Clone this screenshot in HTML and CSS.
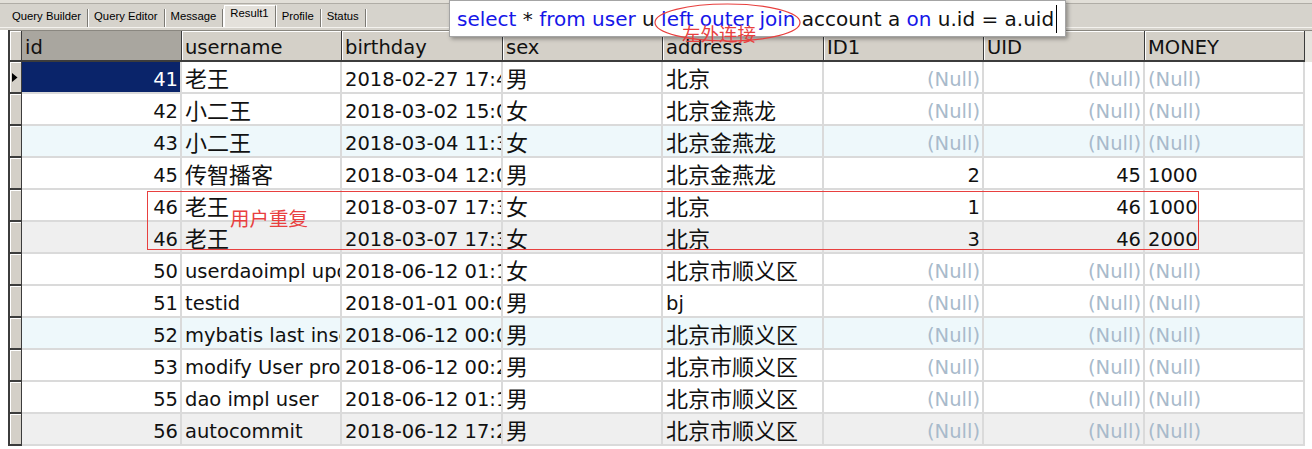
FILE: index.html
```html
<!DOCTYPE html>
<html lang="zh">
<head>
<meta charset="utf-8">
<title>Result1</title>
<link rel="stylesheet" href="styles.css">
</head>
<body>
<div class="top">
  <div class="strip"></div>
  <div class="tabs">
    <div class="tab">Query Builder</div>
    <div class="tab">Query Editor</div>
    <div class="tab">Message</div>
    <div class="tab active">Result1</div>
    <div class="tab">Profile</div>
    <div class="tab">Status</div>
  </div>
</div>

<div class="grid">
  <div class="row hrow">
    <div class="rh corner"></div>
    <div class="hc hsel">id</div>
    <div class="hc">username</div>
    <div class="hc">birthday</div>
    <div class="hc">sex</div>
    <div class="hc">address</div>
    <div class="hc">ID1</div>
    <div class="hc">UID</div>
    <div class="hc">MONEY</div>
    <div class="hfill"></div>
  </div>

  <div class="row">
    <div class="rh"><svg class="ptr" width="12" height="30" viewBox="0 0 12 30"><polygon points="2,11 7.5,15.5 2,20" fill="#000"/></svg></div>
    <div class="c r cursel">41</div><div class="c zh">老王</div><div class="c">2018-02-27 17:47:07</div><div class="c zh">男</div><div class="c zh">北京</div><div class="c r nul">(Null)</div><div class="c r nul">(Null)</div><div class="c nul">(Null)</div><div class="fill"></div>
  </div>
  <div class="row">
    <div class="rh"></div>
    <div class="c r">42</div><div class="c zh">小二王</div><div class="c">2018-03-02 15:09:37</div><div class="c zh">女</div><div class="c zh">北京金燕龙</div><div class="c r nul">(Null)</div><div class="c r nul">(Null)</div><div class="c nul">(Null)</div><div class="fill"></div>
  </div>
  <div class="row blue">
    <div class="rh"></div>
    <div class="c r">43</div><div class="c zh">小二王</div><div class="c">2018-03-04 11:34:34</div><div class="c zh">女</div><div class="c zh">北京金燕龙</div><div class="c r nul">(Null)</div><div class="c r nul">(Null)</div><div class="c nul">(Null)</div><div class="fill"></div>
  </div>
  <div class="row">
    <div class="rh"></div>
    <div class="c r">45</div><div class="c zh">传智播客</div><div class="c">2018-03-04 12:04:06</div><div class="c zh">男</div><div class="c zh">北京金燕龙</div><div class="c r">2</div><div class="c r">45</div><div class="c">1000</div><div class="fill"></div>
  </div>
  <div class="row">
    <div class="rh"></div>
    <div class="c r">46</div><div class="c zh">老王</div><div class="c">2018-03-07 17:37:26</div><div class="c zh">女</div><div class="c zh">北京</div><div class="c r">1</div><div class="c r">46</div><div class="c">1000</div><div class="fill"></div>
  </div>
  <div class="row gray">
    <div class="rh"></div>
    <div class="c r">46</div><div class="c zh">老王</div><div class="c">2018-03-07 17:37:26</div><div class="c zh">女</div><div class="c zh">北京</div><div class="c r">3</div><div class="c r">46</div><div class="c">2000</div><div class="fill"></div>
  </div>
  <div class="row">
    <div class="rh"></div>
    <div class="c r">50</div><div class="c">userdaoimpl update</div><div class="c">2018-06-12 01:19:53</div><div class="c zh">女</div><div class="c zh">北京市顺义区</div><div class="c r nul">(Null)</div><div class="c r nul">(Null)</div><div class="c nul">(Null)</div><div class="fill"></div>
  </div>
  <div class="row">
    <div class="rh"></div>
    <div class="c r">51</div><div class="c">testid</div><div class="c">2018-01-01 00:00:00</div><div class="c zh">男</div><div class="c">bj</div><div class="c r nul">(Null)</div><div class="c r nul">(Null)</div><div class="c nul">(Null)</div><div class="fill"></div>
  </div>
  <div class="row blue">
    <div class="rh"></div>
    <div class="c r">52</div><div class="c">mybatis last insert id</div><div class="c">2018-06-12 00:00:00</div><div class="c zh">男</div><div class="c zh">北京市顺义区</div><div class="c r nul">(Null)</div><div class="c r nul">(Null)</div><div class="c nul">(Null)</div><div class="fill"></div>
  </div>
  <div class="row">
    <div class="rh"></div>
    <div class="c r">53</div><div class="c">modify User property</div><div class="c">2018-06-12 00:25:11</div><div class="c zh">男</div><div class="c zh">北京市顺义区</div><div class="c r nul">(Null)</div><div class="c r nul">(Null)</div><div class="c nul">(Null)</div><div class="fill"></div>
  </div>
  <div class="row">
    <div class="rh"></div>
    <div class="c r">55</div><div class="c">dao impl user</div><div class="c">2018-06-12 01:11:48</div><div class="c zh">男</div><div class="c zh">北京市顺义区</div><div class="c r nul">(Null)</div><div class="c r nul">(Null)</div><div class="c nul">(Null)</div><div class="fill"></div>
  </div>
  <div class="row gray">
    <div class="rh"></div>
    <div class="c r">56</div><div class="c">autocommit</div><div class="c">2018-06-12 17:24:30</div><div class="c zh">男</div><div class="c zh">北京市顺义区</div><div class="c r nul">(Null)</div><div class="c r nul">(Null)</div><div class="c nul">(Null)</div><div class="fill"></div>
  </div>
</div>

<div class="sql"><span class="kw">select</span> * <span class="kw">from</span> <span class="kw">user</span> u <span class="kw">left outer join</span> account a <span class="kw">on</span> u.id = a.uid<span class="caret"></span></div>
<svg class="ellipse" width="160" height="46" viewBox="0 0 160 46"><ellipse cx="77.5" cy="22.5" rx="72.5" ry="18.5" fill="none" stroke="#e8403f" stroke-width="1.2"/></svg>
<div class="note note-join">左外连接</div>
<div class="dup"></div>
<div class="note note-dup">用户重复</div>
</body>
</html>
```

FILE: styles.css
```css
* { box-sizing: border-box; }

body {
  margin: 0;
  width: 1312px;
  height: 449px;
  overflow: hidden;
  position: relative;
  background: #ffffff;
  font-family: "DejaVu Sans", "Noto Sans CJK SC", sans-serif;
  color: #111;
}

.top {
  height: 30px;
  background: #d6d3cc;
}

.strip {
  height: 4px;
  background: #e2dfd8;
  border-bottom: 1px solid #b0ada6;
}

.tabs {
  display: flex;
  align-items: flex-end;
  height: 24px;
  padding-left: 7px;
  border-bottom: 1px solid #f4f2ee;
}

.tab {
  font-family: "Liberation Sans", Arial, sans-serif;
  font-size: 11.3px;
  height: 18px;
  line-height: 14px;
  padding: 0 6px 0 5px;
  border-right: 1px solid #7c7a74;
  box-shadow: 1px 0 0 #ffffff;
  margin-right: 1px;
  color: #000;
}

.tab.active {
  height: 22px;
  padding: 0 6px 0 5px;
  background: #e4e1db;
  border-left: 1px solid #ffffff;
  border-top: 1px solid #ffffff;
}

.grid {
  margin-left: 8px;
  border-left: 2px solid #3c3c3c;
  background: #fff;
}

.row {
  display: grid;
  grid-template-columns: 12px 160px 160px 161px 160px 161px 160px 161px 160px 1fr;
  height: 32px;
}

.hrow {
  height: 32px;
  border-top: 1px solid #8a8780;
  background: #e6e4de;
}

.rh {
  background: #d4d0c8;
  border-right: 1px solid #3c3c3c;
  border-bottom: 2px solid #3c3c3c;
  box-shadow: inset 1px 1px 0 #ffffff;
}

.rh.corner {
  border-bottom: 2px solid #3c3c3c;
}

.ptr { display: block; }

.hc {
  background: #d4d0c8;
  border-right: 1px solid #3c3c3c;
  border-bottom: 2px solid #3c3c3c;
  box-shadow: inset 1px 1px 0 #ffffff;
  padding-left: 3px;
  font-size: 19.5px;
  line-height: 33px;
  overflow: hidden;
  white-space: nowrap;
  color: #111;
}

.hc.hsel {
  background: #a9a69f;
  box-shadow: none;
}

.hfill {
  background: #e6e4de;
}

.c {
  border-right: 2px solid #dadada;
  border-bottom: 2px solid #dadada;
  padding: 0 2px 0 3px;
  font-size: 19.5px;
  line-height: 36px;
  height: 32px;
  overflow: hidden;
  white-space: nowrap;
}

.c.r { text-align: right; }

.c.zh { font-size: 22px; line-height: 35px; }

.c.nul { color: #a8bacb; }

.c.cursel {
  background: #0a246a;
  color: #ffffff;
}

.fill { background: #fff; }

.row.blue .c { background: #eef8fb; }
.row.gray .c { background: #efefef; }

.sql {
  position: absolute;
  left: 449px;
  top: 0;
  width: 617px;
  height: 37px;
  background: #ffffff;
  border: 1px solid #a4a4a4;
  box-shadow: 2px 2px 4px rgba(0, 0, 0, 0.35);
  padding-left: 7px;
  font-size: 20px;
  line-height: 36px;
  white-space: nowrap;
  color: #111;
}

.kw { color: #1616e8; }

.caret {
  display: inline-block;
  width: 1px;
  height: 28px;
  margin-left: 2px;
  background: #000;
  vertical-align: -7px;
}

.ellipse {
  position: absolute;
  left: 650px;
  top: 0;
}

.note {
  position: absolute;
  font-family: "Noto Sans CJK SC", sans-serif;
  color: #e8403f;
  white-space: nowrap;
}

.note-join {
  left: 682px;
  top: 23px;
  font-size: 18.5px;
  line-height: 20px;
}

.dup {
  position: absolute;
  left: 147px;
  top: 191px;
  width: 1052px;
  height: 59px;
  border: 1px solid #e8403f;
}

.note-dup {
  left: 230px;
  top: 207px;
  font-size: 19.5px;
  line-height: 22px;
}
```
